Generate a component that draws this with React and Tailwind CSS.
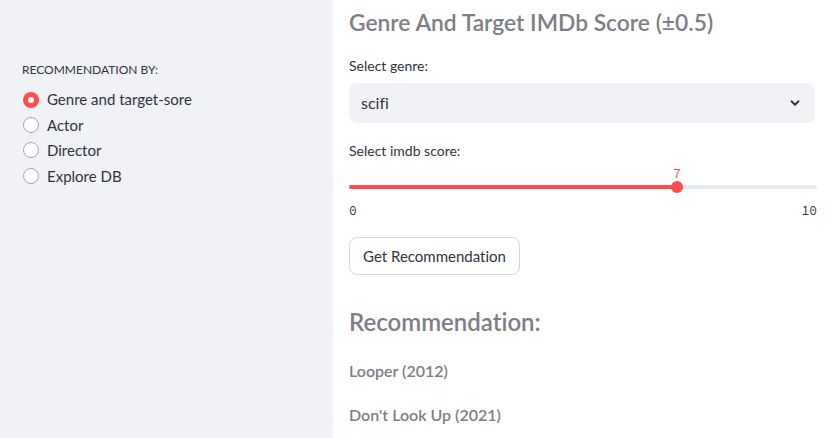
import React from "react";

const font = { fontFamily: '"Source Sans Pro", Lato, "Noto Sans", sans-serif', fontVariantLigatures: "none" };
const mono = { fontFamily: '"Source Code Pro", "DejaVu Sans Mono", monospace' };

function Radio({ checked, label }) {
  return (
    <div className="flex items-center h-[25.4px]">
      {checked ? (
        <span className="w-4 h-4 rounded-full bg-[#ff4b4b] flex items-center justify-center">
          <span className="w-[6px] h-[6px] rounded-full bg-white" />
        </span>
      ) : (
        <span className="w-4 h-4 rounded-full border border-[#a3a8b4] bg-white" />
      )}
      <span className="ml-2 text-[15px] text-[#31333f]">{label}</span>
    </div>
  );
}

export default function App() {
  return (
    <div className="flex w-[835px] h-[438px] overflow-hidden bg-white" style={font}>
      <aside className="w-[333px] shrink-0 bg-[#f0f2f6] pl-[22px] pt-[62px]">
        <div className="text-[12px] text-[#31333f] leading-[16px]">RECOMMENDATION BY:</div>
        <div className="mt-[9px] pl-[1px] flex flex-col">
          <Radio checked label="Genre and target-sore" />
          <Radio label="Actor" />
          <Radio label="Director" />
          <Radio label="Explore DB" />
        </div>
      </aside>
      <main className="w-[468px] ml-[16px] flex flex-col">
        <h1 className="text-[22.8px] font-semibold text-[#7d7e86] leading-[32px] mt-[6px]">
          Genre And Target IMDb Score (±0.5)
        </h1>
        <div className="mt-[19px] text-[14px] text-[#31333f] leading-[18px]">Select genre:</div>
        <div className="mt-[8px] h-[40px] w-[466px] rounded-lg bg-[#f0f2f6] flex items-center justify-between pl-[12px] pr-[13px]">
          <span className="text-[16px] text-[#31333f]">scifi</span>
          <svg width="14" height="14" viewBox="0 0 24 24" fill="none" stroke="#31333f" strokeWidth="3.2" strokeLinecap="round" strokeLinejoin="round">
            <path d="M6 9l6 6 6-6" />
          </svg>
        </div>
        <div className="mt-[19px] text-[14px] text-[#31333f] leading-[18px]">Select imdb score:</div>
        <div className="relative h-[50px] mt-[2px]">
          <div
            className="absolute top-[3px] text-[14px] text-[#ff4b4b] leading-[16px] -translate-x-1/2 left-[328px]"
            style={mono}
          >
            7
          </div>
          <div className="absolute left-0 right-0 top-[23px] h-[4px] rounded bg-[#e6e9ef]" />
          <div className="absolute left-0 w-[328px] top-[23px] h-[4px] rounded bg-[#ff4b4b]" />
          <div className="absolute left-[322px] top-[19px] w-[12px] h-[12px] rounded-full bg-[#ff4b4b]" />
        </div>
        <div
          className="flex justify-between text-[13px] text-[#31333f] leading-[16px] -mt-[9px]"
          style={mono}
        >
          <span>0</span>
          <span>10</span>
        </div>
        <button className="mt-[18px] self-start h-[38px] w-[171px] rounded-lg border border-[#d5d6da] bg-white text-[15px] text-[#31333f]">
          Get Recommendation
        </button>
        <h2 className="mt-[32px] text-[24px] font-semibold text-[#7d7e86] leading-[30px]">Recommendation:</h2>
        <div className="mt-[24px] text-[16px] font-semibold text-[#7d7e86] leading-[20px]">Looper (2012)</div>
        <div className="mt-[24px] text-[16px] font-semibold text-[#7d7e86] leading-[20px]">Don't Look Up (2021)</div>
      </main>
    </div>
  );
}
